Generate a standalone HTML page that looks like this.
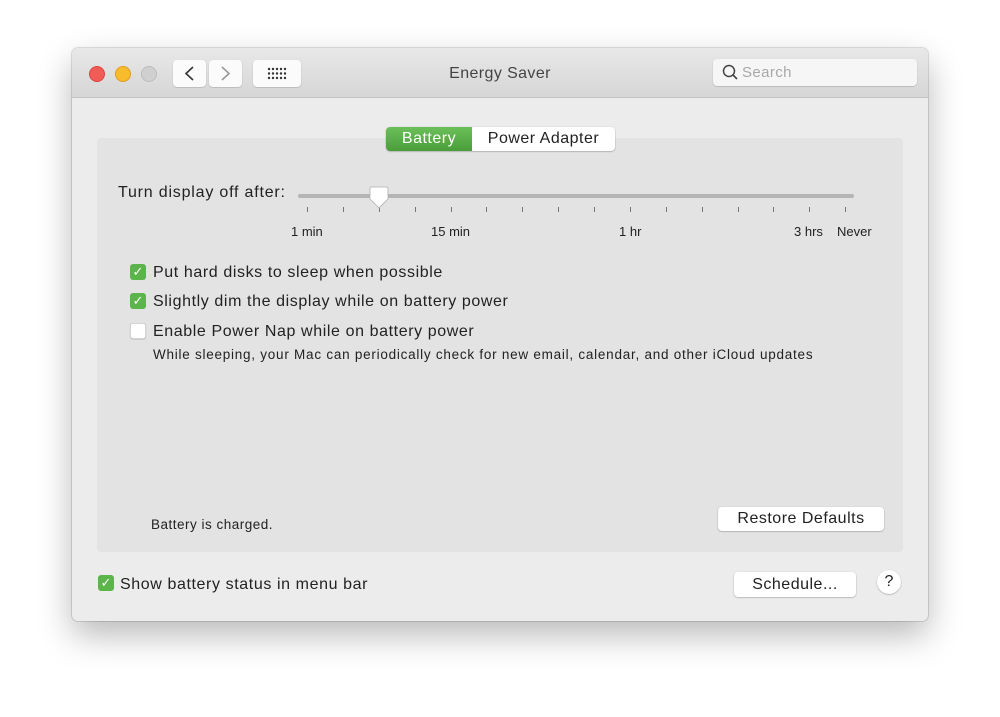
<!DOCTYPE html>
<html><head><style>
body{margin:0;width:1000px;height:717px;background:#fff;font-family:"Liberation Sans",sans-serif;position:relative;overflow:hidden;color:#222}
.win{position:absolute;left:72px;top:48px;width:856px;height:573px;background:#ececec;border-radius:6px;box-shadow:0 14px 34px rgba(0,0,0,.28),0 0 0 1px rgba(0,0,0,.12);overflow:hidden}
.tb{position:absolute;left:0;top:0;width:856px;height:49px;background:linear-gradient(#e8e8e8,#d6d6d6);border-bottom:1px solid #c4c4c4}
.dot{position:absolute;top:18px;width:14px;height:14px;border-radius:50%}
.btn{position:absolute;background:#fbfbfb;border-radius:4px;box-shadow:0 0.5px 1px rgba(0,0,0,.25)}
.a{position:absolute;white-space:nowrap}
.t16{font-size:16px;letter-spacing:0.6px}
.panel{position:absolute;left:25px;top:90px;width:806px;height:414px;background:#e3e3e3;border-radius:4px}
.cb{position:absolute;width:16px;height:16px;border-radius:3px;background:#5cb54a;color:#fff;font-size:13px;line-height:16px;text-align:center}
.pb{position:absolute;background:#fff;border-radius:4px;box-shadow:0 0.5px 1.5px rgba(0,0,0,.35);text-align:center;font-size:16px;letter-spacing:0.5px}
.tick{position:absolute;top:159px;width:1px;height:5px;background:#777}
</style></head><body>
<div class="win">
<div class="tb">
<div class="dot" style="left:17px;background:#f25c56;border:0.5px solid #d9463f"></div>
<div class="dot" style="left:43px;background:#f8bb2c;border:0.5px solid #dd9e1f"></div>
<div class="dot" style="left:69px;background:#d0d0d0;border:0.5px solid #bcbcbc"></div>
<div class="btn" style="left:101px;top:12px;width:33px;height:27px"><svg width="33" height="27"><path d="M20 7 L13 13.5 L20 20" stroke="#333" stroke-width="1.6" fill="none"/></svg></div>
<div class="btn" style="left:137px;top:12px;width:33px;height:27px"><svg width="33" height="27"><path d="M13 7 L20 13.5 L13 20" stroke="#999" stroke-width="1.6" fill="none"/></svg></div>
<div class="btn" style="left:181px;top:12px;width:48px;height:27px"><svg width="48" height="27" fill="#333"><g><circle cx="16" cy="9" r="1.2"/><circle cx="20" cy="9" r="1.2"/><circle cx="24" cy="9" r="1.2"/><circle cx="28" cy="9" r="1.2"/><circle cx="32" cy="9" r="1.2"/><circle cx="16" cy="13.5" r="1.2"/><circle cx="20" cy="13.5" r="1.2"/><circle cx="24" cy="13.5" r="1.2"/><circle cx="28" cy="13.5" r="1.2"/><circle cx="32" cy="13.5" r="1.2"/><circle cx="16" cy="18" r="1.2"/><circle cx="20" cy="18" r="1.2"/><circle cx="24" cy="18" r="1.2"/><circle cx="28" cy="18" r="1.2"/><circle cx="32" cy="18" r="1.2"/></g></svg></div>
<div class="a" style="left:0;width:856px;text-align:center;top:17px;font-size:16px;color:#444;letter-spacing:0.4px">Energy Saver</div>
<div class="btn" style="left:641px;top:11px;width:204px;height:27px;background:#f6f6f6"><svg width="24" height="27" style="position:absolute;left:5px;top:0"><circle cx="11" cy="12" r="5.5" stroke="#444" stroke-width="1.5" fill="none"/><path d="M15 16 L19 20" stroke="#444" stroke-width="1.6"/></svg><span class="a" style="left:29px;top:5px;font-size:15px;color:#a8a8a8;letter-spacing:0.4px">Search</span></div>
</div>
<div class="panel"></div>
<div class="pb" style="left:314px;top:79px;width:229px;height:24px;border-radius:4px"></div>
<div class="a" style="left:314px;top:79px;width:86px;height:24px;background:linear-gradient(#6cc05a,#4a9e3a);border-radius:4px 0 0 4px;color:#fff;font-size:16px;letter-spacing:0.5px;text-align:center;line-height:24px">Battery</div>
<div class="a" style="left:400px;top:79px;width:143px;height:24px;font-size:16px;letter-spacing:0.5px;text-align:center;line-height:24px">Power Adapter</div>
<div class="a t16" style="left:46px;top:136px;letter-spacing:0.8px">Turn display off after:</div>
<div class="a" style="left:226px;top:146px;width:556px;height:4px;border-radius:2px;background:#b5b5b5"></div>
<div class="tick" style="left:235px"></div><div class="tick" style="left:271px"></div><div class="tick" style="left:307px"></div><div class="tick" style="left:343px"></div><div class="tick" style="left:379px"></div><div class="tick" style="left:414px"></div><div class="tick" style="left:450px"></div><div class="tick" style="left:486px"></div><div class="tick" style="left:522px"></div><div class="tick" style="left:558px"></div><div class="tick" style="left:594px"></div><div class="tick" style="left:630px"></div><div class="tick" style="left:666px"></div><div class="tick" style="left:701px"></div><div class="tick" style="left:737px"></div><div class="tick" style="left:773px"></div>
<svg class="a" style="left:296px;top:138px" width="22" height="26"><path d="M2 3 Q2 1 4 1 H18 Q20 1 20 3 V13 L11 22 L2 13 Z" fill="#fff" stroke="#b0b0b0" stroke-width="0.8"/></svg>
<div class="a" style="left:219px;top:176px;font-size:13px">1 min</div>
<div class="a" style="left:359px;top:176px;font-size:13px">15 min</div>
<div class="a" style="left:547px;top:176px;font-size:13px">1 hr</div>
<div class="a" style="left:722px;top:176px;font-size:13px">3 hrs</div>
<div class="a" style="left:765px;top:176px;font-size:13px">Never</div>
<div class="cb" style="left:58px;top:216px">✓</div><div class="a t16" style="left:81px;top:216px">Put hard disks to sleep when possible</div>
<div class="cb" style="left:58px;top:245px">✓</div><div class="a t16" style="left:81px;top:245px">Slightly dim the display while on battery power</div>
<div class="cb" style="left:58px;top:275px;background:#fff;box-shadow:0 0 0 0.5px #aaa inset,0 0.5px 1px rgba(0,0,0,.2)"></div><div class="a t16" style="left:81px;top:275px">Enable Power Nap while on battery power</div>
<div class="a" style="left:81px;top:299px;font-size:13.5px;letter-spacing:0.75px">While sleeping, your Mac can periodically check for new email, calendar, and other iCloud updates</div>
<div class="a" style="left:79px;top:469px;font-size:13.5px;letter-spacing:0.5px">Battery is charged.</div>
<div class="pb" style="left:646px;top:459px;width:166px;height:24px;line-height:24px">Restore Defaults</div>
<div class="cb" style="left:26px;top:527px">✓</div><div class="a t16" style="left:48px;top:528px">Show battery status in menu bar</div>
<div class="pb" style="left:662px;top:524px;width:122px;height:25px;line-height:25px">Schedule...</div>
<div class="pb" style="left:805px;top:522px;width:24px;height:24px;border-radius:50%;line-height:24px;letter-spacing:0">?</div>
</div>
</body></html>
